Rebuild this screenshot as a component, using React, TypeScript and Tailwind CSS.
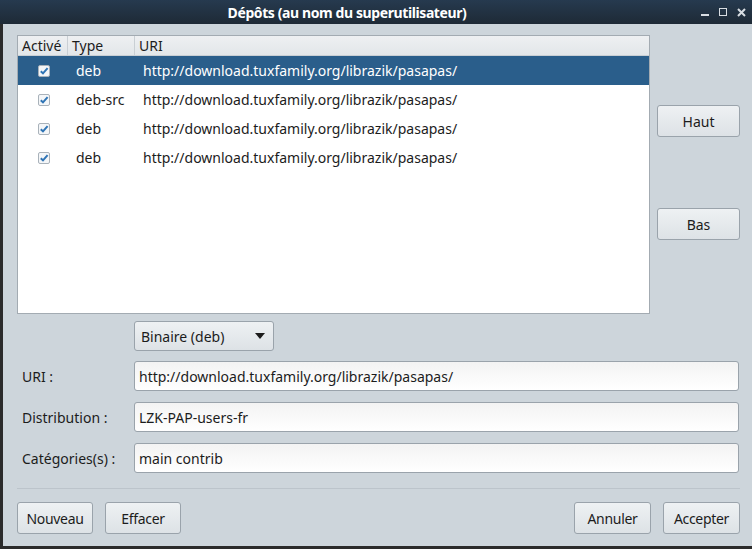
import React from "react"

const rows = [
  { type: "deb", uri: "http://download.tuxfamily.org/librazik/pasapas/", selected: true },
  { type: "deb-src", uri: "http://download.tuxfamily.org/librazik/pasapas/", selected: false },
  { type: "deb", uri: "http://download.tuxfamily.org/librazik/pasapas/", selected: false },
  { type: "deb", uri: "http://download.tuxfamily.org/librazik/pasapas/", selected: false },
]

function Check() {
  return (
    <svg width="12" height="12" viewBox="0 0 12 12">
      <rect x="0.5" y="0.5" width="11" height="11" rx="1.5" fill="#f4f6f8" stroke="#a9b2ba" />
      <path d="M2.8 6.2 L5 8.4 L9.6 3.2" fill="none" stroke="#2f74b5" strokeWidth="2" />
    </svg>
  )
}

function Button({ children, className = "" }: { children: React.ReactNode; className?: string }) {
  return (
    <button
      className={`h-[32px] rounded-[3px] border border-[#9aa3ab] bg-gradient-to-b from-[#eef1f3] to-[#dde2e6] text-[14px] text-[#1c1c1c] ${className}`}
    >
      {children}
    </button>
  )
}

function Field({ label, value }: { label: string; value: string }) {
  return (
    <div className="flex items-center">
      <div className="w-[117px] pl-[5px] text-[14px] text-[#1c1c1c]">{label}</div>
      <div className="mr-px flex h-[30px] flex-1 items-center rounded-[3px] border border-[#9aa3ab] bg-gradient-to-b from-[#f3f3f3] to-[#ffffff] px-[4px] text-[14px] text-[#1c1c1c]">
        {value}
      </div>
    </div>
  )
}

export default function App() {
  return (
    <div
      className="flex h-[549px] w-[752px] flex-col border-b-[3px] border-l-[3px] border-[#2b2b2b] bg-[#cdd5db]"
      style={{ fontFamily: '"Noto Sans", sans-serif' }}
    >
      <div className="relative -ml-[3px] flex h-[24px] items-center justify-center bg-gradient-to-b from-[#263a4f] to-[#1e2a36] text-[14px] font-bold tracking-[-0.4px] text-white">
        <span className="-ml-[58px]">Dépôts (au nom du superutilisateur)</span>
        <div className="absolute right-[6px] top-0 flex h-[24px] items-center gap-[10px] text-[#d8dde2]">
          <div className="mt-[6px] h-[2px] w-[8px] bg-[#d8dde2]" />
          <div className="h-[8px] w-[8px] border-[1.5px] border-[#d8dde2]" />
          <svg width="9" height="9" viewBox="0 0 9 9">
            <path d="M1 1 L8 8 M8 1 L1 8" stroke="#d8dde2" strokeWidth="2" />
          </svg>
        </div>
      </div>

      <div className="flex flex-1 flex-col pl-[14px] pr-[12px] pt-[11px]">
        <div className="flex gap-[7px]">
          <div className="h-[279px] w-[633px] border border-[#a3abb2] bg-white">
            <div className="flex h-[20px] border-b border-[#c9cfd4] bg-gradient-to-b from-[#eef0f2] to-[#e2e6e9] text-[14px] leading-[20px] text-[#1c1c1c]">
              <div className="w-[50px] border-r border-[#c9cfd4] pl-[4px]">Activé</div>
              <div className="w-[67px] border-r border-[#c9cfd4] pl-[4px]">Type</div>
              <div className="flex-1 pl-[4px]">URI</div>
            </div>
            {rows.map((r, i) => (
              <div
                key={i}
                className={`flex h-[29px] items-center text-[14px] ${r.selected ? "bg-[#2a5e8b] text-white" : "text-[#1c1c1c]"}`}
              >
                <div className="flex w-[50px] justify-center pl-[1px]">
                  <Check />
                </div>
                <div className="w-[67px] pl-[8px]">{r.type}</div>
                <div className="flex-1 pl-[8px]">{r.uri}</div>
              </div>
            ))}
          </div>
          <div className="flex flex-1 flex-col gap-[71px] pt-[70px]">
            <Button className="w-[83px]">Haut</Button>
            <Button className="w-[83px]">Bas</Button>
          </div>
        </div>

        <div className="mt-[7px] flex flex-col gap-[10px]">
          <div className="pl-[117px]">
            <div className="flex h-[30px] w-[140px] items-center justify-between rounded-[3px] border border-[#9aa3ab] bg-gradient-to-b from-[#eef1f3] to-[#dde2e6] pl-[6px] pr-[8px] text-[14px] text-[#1c1c1c]">
              <span>Binaire (deb)</span>
              <svg width="10" height="6" viewBox="0 0 10 6">
                <path d="M0 0 L10 0 L5 6 Z" fill="#1c1c1c" />
              </svg>
            </div>
          </div>
          <div className="flex flex-col gap-[11px]">
            <Field label="URI :" value="http://download.tuxfamily.org/librazik/pasapas/" />
            <Field label="Distribution :" value="LZK-PAP-users-fr" />
            <Field label="Catégories(s) :" value="main contrib" />
          </div>
        </div>

        <div className="mt-[15px] h-px bg-[#bcc4cb]" />

        <div className="mt-[13px] flex items-center tracking-[-0.3px]">
          <Button className="w-[76px]">Nouveau</Button>
          <Button className="ml-[12px] w-[76px]">Effacer</Button>
          <div className="flex-1" />
          <Button className="w-[77px]">Annuler</Button>
          <Button className="ml-[12px] w-[77px]">Accepter</Button>
        </div>
      </div>
    </div>
  )
}
